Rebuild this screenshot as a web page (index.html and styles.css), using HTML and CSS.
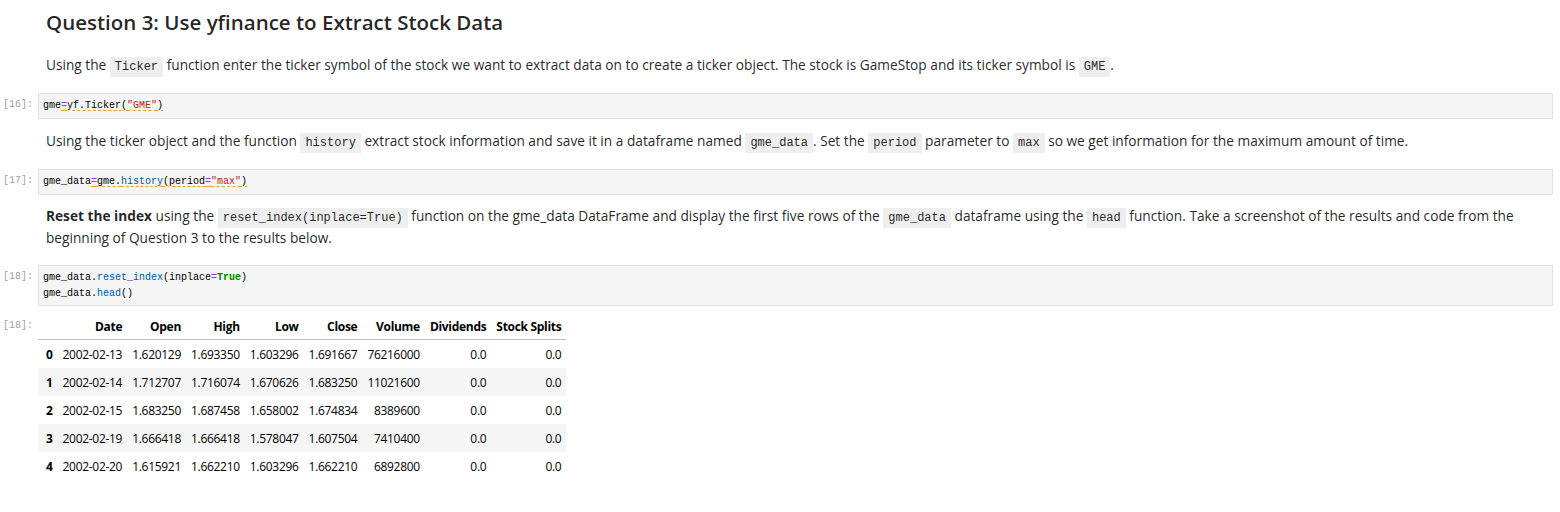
FILE: index.html
```html
<!DOCTYPE html>
<html>
<head>
<meta charset="utf-8">
<link rel="stylesheet" href="styles.css">
</head>
<body>
<div class="notebook">
  <div class="cell md">
    <div class="prompt"></div>
    <div class="md-body">
      <h2 class="title">Question 3: Use yfinance to Extract Stock Data</h2>
      <p class="para p1">Using the <code>Ticker</code> function enter the ticker symbol of the stock we want to extract data on to create a ticker object. The stock is GameStop and its ticker symbol is <code>GME</code>.</p>
    </div>
  </div>

  <div class="cell code c1">
    <div class="prompt">[16]:</div>
    <div class="input"><pre>gme<span class="lint"><span class="op">=</span>yf.Ticker(<span class="str">"GME"</span>)</span></pre></div>
  </div>

  <div class="cell md">
    <div class="prompt"></div>
    <div class="md-body">
      <p class="para p2">Using the ticker object and the function <code>history</code> extract stock information and save it in a dataframe named <code>gme_data</code>. Set the <code>period</code> parameter to <code>max</code> so we get information for the maximum amount of time.</p>
    </div>
  </div>

  <div class="cell code c2">
    <div class="prompt">[17]:</div>
    <div class="input"><pre>gme_data<span class="lint"><span class="op">=</span>gme.<span class="fn">history</span>(period<span class="op">=</span><span class="str">"max"</span>)</span></pre></div>
  </div>

  <div class="cell md">
    <div class="prompt"></div>
    <div class="md-body">
      <p class="para p3"><b>Reset the index</b> using the <code>reset_index(inplace=True)</code> function on the gme_data DataFrame and display the first five rows of the <code>gme_data</code> dataframe using the <code>head</code> function. Take a screenshot of the results and code from the beginning of Question 3 to the results below.</p>
    </div>
  </div>

  <div class="cell code c3">
    <div class="prompt">[18]:</div>
    <div class="input"><pre>gme_data.<span class="fn">reset_index</span>(inplace<span class="op">=</span><span class="kw">True</span>)
gme_data.<span class="fn">head</span>()</pre></div>
  </div>

  <div class="cell out">
    <div class="prompt">[18]:</div>
    <div class="output">
      <table class="df">
        <thead>
          <tr><th></th><th>Date</th><th>Open</th><th>High</th><th>Low</th><th>Close</th><th>Volume</th><th>Dividends</th><th>Stock Splits</th></tr>
        </thead>
        <tbody>
          <tr><th>0</th><td>2002-02-13</td><td>1.620129</td><td>1.693350</td><td>1.603296</td><td>1.691667</td><td>76216000</td><td>0.0</td><td>0.0</td></tr>
          <tr><th>1</th><td>2002-02-14</td><td>1.712707</td><td>1.716074</td><td>1.670626</td><td>1.683250</td><td>11021600</td><td>0.0</td><td>0.0</td></tr>
          <tr><th>2</th><td>2002-02-15</td><td>1.683250</td><td>1.687458</td><td>1.658002</td><td>1.674834</td><td>8389600</td><td>0.0</td><td>0.0</td></tr>
          <tr><th>3</th><td>2002-02-19</td><td>1.666418</td><td>1.666418</td><td>1.578047</td><td>1.607504</td><td>7410400</td><td>0.0</td><td>0.0</td></tr>
          <tr><th>4</th><td>2002-02-20</td><td>1.615921</td><td>1.662210</td><td>1.603296</td><td>1.662210</td><td>6892800</td><td>0.0</td><td>0.0</td></tr>
        </tbody>
      </table>
    </div>
  </div>
</div>
</body>
</html>
```

FILE: styles.css
```css
html, body {
  margin: 0;
  padding: 0;
  background: #ffffff;
}
body {
  font-family: "Open Sans", "Noto Sans", sans-serif;
  font-size: 13.7px;
  color: rgba(0, 0, 0, 0.87);
  width: 1560px;
  height: 512px;
  overflow: hidden;
}
.notebook {
  display: flex;
  flex-direction: column;
  padding-right: 7px;
}
.cell {
  display: flex;
  align-items: flex-start;
}
.prompt {
  width: 33px;
  flex: none;
  padding-right: 5px;
  text-align: right;
  font-family: "Liberation Mono", monospace;
  font-size: 10px;
  color: #9e9e9e;
  line-height: 16px;
}
.md-body {
  flex: 1;
  padding-left: 8px;
}
.title {
  margin: 0;
  padding-top: 8px;
  font-size: 20.5px;
  font-weight: 600;
  line-height: 28px;
  color: rgba(0, 0, 0, 0.87);
}
.para {
  margin: 0;
  line-height: 22px;
}
.p1 { padding-top: 18px; padding-bottom: 17px; }
.p2 { padding-top: 11px; padding-bottom: 17px; }
.p3 { padding-top: 10px; padding-bottom: 16px; }
.para b { font-weight: 700; }
code {
  font-family: "Liberation Mono", monospace;
  font-size: 12px;
  line-height: 0;
  background: #eeeeee;
  padding: 3px 5px;
}
.code .prompt {
  padding-top: 4px;
}
.input {
  flex: 1;
  background: #f5f5f5;
  border: 1px solid #e0e0e0;
  padding: 4px 4px;
}
.c3 .input {
  padding-bottom: 3px;
}
.input pre {
  margin: 0;
  font-family: "Liberation Mono", monospace;
  font-size: 10px;
  line-height: 16px;
  color: #000;
}
.op { color: #aa22ff; }
.str { color: #ba2121; }
.fn { color: #0055aa; }
.kw { color: #008000; font-weight: 700; }
.lint {
  text-decoration: underline dashed #f0a030;
  text-underline-offset: 2px;
}
.out {
  padding-top: 12px;
}
.output {
  flex: 1;
}
.df {
  border-collapse: collapse;
  font-size: 12px;
  letter-spacing: -0.3px;
  color: #000;
}
.df th, .df td {
  text-align: right;
  padding: 0 5px;
  height: 28px;
  white-space: nowrap;
}
.df thead th {
  font-weight: 700;
  height: 14px;
  padding-bottom: 4px;
  border-bottom: 1px solid #bdbdbd;
}
.df tbody th {
  font-weight: 700;
  padding-left: 8px;
}
.df td { font-weight: 400; }
.df tbody tr:nth-child(odd) { background: #ffffff; }
.df tbody tr:nth-child(even) { background: #f5f5f5; }
```
